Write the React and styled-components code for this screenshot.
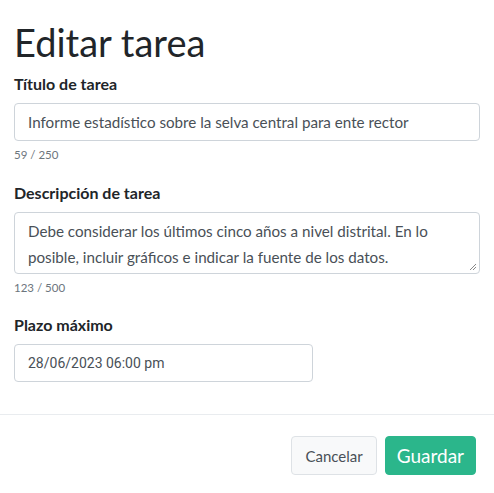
import React from "react";
import styled, { createGlobalStyle } from "styled-components";

const Global = createGlobalStyle`
  html, body { margin: 0; padding: 0; background: #fff; }
  body { font-family: Lato, "Noto Sans", sans-serif; color: #212529; }
  * { box-sizing: border-box; }
`;

const Page = styled.div`
  width: 494px;
  display: flex;
  flex-direction: column;
`;

const Body = styled.div`
  padding: 14px 14px 0 14px;
  display: flex;
  flex-direction: column;
`;

const Title = styled.h1`
  margin: 6px 0 10px 0;
  font-size: 38px;
  font-weight: 400;
  line-height: 44px;
  color: #212529;
`;

const Field = styled.div`
  display: flex;
  flex-direction: column;
  margin-bottom: ${(p) => p.$mb || 0}px;
`;

const Label = styled.label`
  font-size: 16px;
  font-weight: 700;
  line-height: 20px;
  margin-bottom: 9px;
  color: #212529;
`;

const Input = styled.div`
  width: ${(p) => p.$w || "100%"};
  height: 38px;
  border: 1px solid #ced4da;
  border-radius: 4px;
  padding: 0 13px;
  display: flex;
  align-items: center;
  font-size: ${(p) => (p.$alt ? "14px" : "15.2px")};
  color: #495057;
  font-family: ${(p) => (p.$alt ? "Roboto, sans-serif" : "inherit")};
`;

const TextArea = styled.div`
  position: relative;
  width: 100%;
  height: 62px;
  border: 1px solid #ced4da;
  border-radius: 4px;
  padding: 5px 13px;
  font-size: 15.2px;
  line-height: 26px;
  color: #495057;
`;

const Grip = styled.svg`
  position: absolute;
  right: 2px;
  bottom: 2px;
`;

const Counter = styled.div`
  font-size: 11.5px;
  color: #6c757d;
  margin-top: 7px;
  line-height: 14px;
`;

const Divider = styled.hr`
  margin: 32px 0 0 0;
  border: 0;
  border-top: 1px solid #e9ecef;
`;

const Footer = styled.div`
  display: flex;
  justify-content: flex-end;
  gap: 8px;
  padding: 21px 18px 0 0;
`;

const Button = styled.button`
  height: 39px;
  border-radius: 4px;
  font-family: inherit;
  padding: 0 ${(p) => (p.$primary ? 11 : 13)}px;
  font-size: ${(p) => (p.$primary ? "19px" : "15px")};
  background: ${(p) => (p.$primary ? "#2bb68b" : "#f8f9fa")};
  color: ${(p) => (p.$primary ? "#fff" : "#495057")};
  border: 1px solid ${(p) => (p.$primary ? "#2bb68b" : "#dee2e6")};
`;

export default function App() {
  return (
    <Page>
      <Global />
      <Body>
        <Title>Editar tarea</Title>
        <Field $mb={21}>
          <Label>Título de tarea</Label>
          <Input>Informe estadístico sobre la selva central para ente rector</Input>
          <Counter>59 / 250</Counter>
        </Field>
        <Field $mb={20}>
          <Label>Descripción de tarea</Label>
          <TextArea>
            Debe considerar los últimos cinco años a nivel distrital. En lo posible, incluir gráficos e indicar la fuente de los datos.
            <Grip width="8" height="8" viewBox="0 0 8 8">
              <path d="M7 1 L1 7 M7 4 L4 7" stroke="#888" strokeWidth="1" />
            </Grip>
          </TextArea>
          <Counter>123 / 500</Counter>
        </Field>
        <Field>
          <Label>Plazo máximo</Label>
          <Input $w="299px" $alt>28/06/2023 06:00 pm</Input>
        </Field>
      </Body>
      <Divider />
      <Footer>
        <Button>Cancelar</Button>
        <Button $primary>Guardar</Button>
      </Footer>
    </Page>
  );
}
